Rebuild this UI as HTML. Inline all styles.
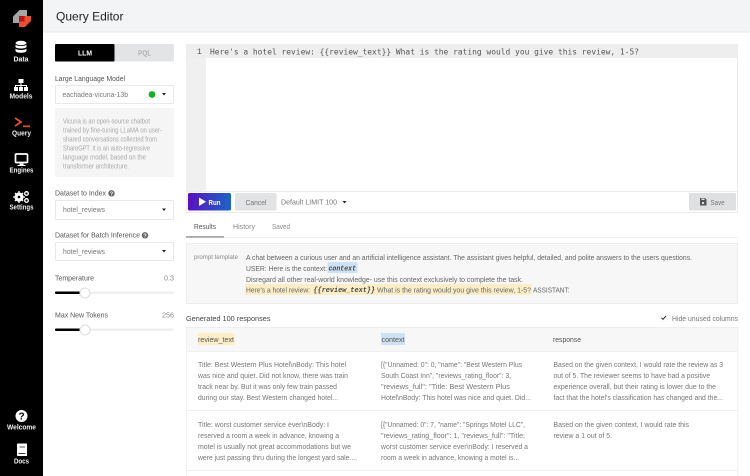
<!DOCTYPE html>
<html><head><meta charset="utf-8"><style>
html,body{margin:0;padding:0;background:#fff}
svg{display:block;font-family:"Liberation Sans",sans-serif}
.n{font-size:7.6px;fill:#f0f0f0;text-anchor:middle;font-weight:bold}
.l{font-size:7.7px;fill:#555}
.d{font-size:7.2px;fill:#aaa}
.t{font-size:7.7px;fill:#777}
.p{font-size:7.7px;fill:#666}
.m{font-family:"Liberation Mono",monospace;font-weight:bold;font-style:italic;font-size:7.5px;fill:#444}
</style></head><body>
<svg width="750" height="476" viewBox="0 0 750 476" xmlns="http://www.w3.org/2000/svg">
<rect width="750" height="476" fill="#fff"/>
<rect x="43" width="707" height="32" fill="#f3f4f6"/>
<rect x="43" y="31.500" width="707" height="1" fill="#e6e7e9"/>
<rect width="43" height="476" fill="#000"/>

<!-- logo -->
<path d="M13 16.500L19.500 10H27V16H19V23H13Z" fill="#a5a5a5"/>
<path d="M19 16H31V21L25 27H19Z" fill="#e8502f"/>
<rect x="19" y="16" width="5.500" height="5.500" fill="#b81414"/>

<!-- Data -->
<g fill="#fff"><ellipse cx="21" cy="43" rx="5.500" ry="2.200"/><path d="M15.500 44.500c1 2 10 2 11 0V47c-1 2-10 2-11 0Z"/><path d="M15.500 48.500c1 2 10 2 11 0V51c-1 2.400-10 2.400-11 0Z"/></g>
<text class="n" x="21" y="61.500" textLength="15" lengthAdjust="spacingAndGlyphs">Data</text>
<!-- Models -->
<g fill="#fff"><rect x="18.500" y="79" width="5" height="4"/><rect x="14" y="87" width="4" height="4"/><rect x="19" y="87" width="4" height="4"/><rect x="24" y="87" width="4" height="4"/><path d="M20.500 83h1v2h5.500v2h-1v-1H21.500v1h-1v-1H16v1h-1v-2h5.500Z"/></g>
<text class="n" x="21" y="98.500" textLength="23" lengthAdjust="spacingAndGlyphs">Models</text>
<!-- Query -->
<path d="M15 118l6 4-6 4" fill="none" stroke="#e8502f" stroke-width="1.800"/>
<rect x="23" y="125.500" width="7" height="1.700" fill="#e8502f"/>
<text class="n" x="21.500" y="135.500" textLength="19" lengthAdjust="spacingAndGlyphs">Query</text>
<!-- Engines -->
<rect x="15.500" y="154" width="12" height="8.500" rx="1" fill="none" stroke="#fff" stroke-width="1.700"/>
<path d="M19.500 163.500h4v1.500h2v1h-8v-1h2Z" fill="#fff"/>
<text class="n" x="21.500" y="172.500" textLength="24" lengthAdjust="spacingAndGlyphs">Engines</text>
<!-- Settings -->
<circle cx="19" cy="197" r="3.200" fill="none" stroke="#fff" stroke-width="2.800"/>
<path d="M19 191v12M13 197h12M15 193l8 8M23 193l-8 8" stroke="#fff" stroke-width="1.300"/>
<circle cx="19" cy="197" r="1.300" fill="#000"/>
<circle cx="26.500" cy="193.500" r="1.800" fill="none" stroke="#fff" stroke-width="1.300"/>
<circle cx="26.500" cy="200.500" r="1.800" fill="none" stroke="#fff" stroke-width="1.300"/>
<text class="n" x="21.500" y="209.500" textLength="24" lengthAdjust="spacingAndGlyphs">Settings</text>
<!-- Welcome -->
<circle cx="21.500" cy="416" r="6" fill="#fff"/>
<text x="21.500" y="419.500" font-size="10" font-weight="bold" text-anchor="middle" fill="#000">?</text>
<text class="n" x="21.500" y="429.500" textLength="29" lengthAdjust="spacingAndGlyphs">Welcome</text>
<!-- Docs -->
<path d="M17.500 443.500h9.500v12.500h-9a1 1 0 0 1-1-1V444.500a1 1 0 0 1 .5-1Z" fill="#fff"/>
<rect x="19.500" y="446" width="5.500" height="2" fill="#aaa"/>
<rect x="18.500" y="453" width="7" height=".9" fill="#222"/>
<text class="n" x="21.500" y="463.500" textLength="15" lengthAdjust="spacingAndGlyphs">Docs</text>

<text x="56" y="20.500" font-size="12" fill="#222" textLength="67.500" lengthAdjust="spacingAndGlyphs">Query Editor</text>

<!-- Left panel -->
<rect x="55" y="44" width="119" height="17.500" rx="1.500" fill="#e3e4e6"/>
<rect x="55" y="44" width="59.500" height="17.500" rx="1" fill="#000"/>
<text x="85" y="55.500" font-size="7.700" font-weight="bold" fill="#fff" text-anchor="middle" textLength="14" lengthAdjust="spacingAndGlyphs">LLM</text>
<text x="144.500" y="55.500" font-size="7.700" fill="#999" text-anchor="middle" textLength="13" lengthAdjust="spacingAndGlyphs">PQL</text>

<text class="l" x="55" y="81" textLength="70" lengthAdjust="spacingAndGlyphs">Large Language Model</text>
<rect x="55.500" y="85.500" width="118" height="18" rx="1" fill="#fff" stroke="#e9e9e9"/>
<text class="t" x="62.500" y="97" textLength="65.500" lengthAdjust="spacingAndGlyphs">eachadea-vicuna-13b</text>
<circle cx="152" cy="94.500" r="3.400" fill="#12b02c"/>
<path d="M162 93h4l-2 2.500Z" fill="#222"/>

<rect x="55" y="108" width="119" height="69" fill="#f5f5f5"/>
<text class="d" x="63" y="123.300" textLength="87" lengthAdjust="spacingAndGlyphs">Vicuna is an open-source chatbot</text>
<text class="d" x="63" y="132.300" textLength="99" lengthAdjust="spacingAndGlyphs">trained by fine-tuning LLaMA on user-</text>
<text class="d" x="63" y="141.300" textLength="94" lengthAdjust="spacingAndGlyphs">shared conversations collected from</text>
<text class="d" x="63" y="150.300" textLength="87" lengthAdjust="spacingAndGlyphs">ShareGPT. It is an auto-regressive</text>
<text class="d" x="63" y="159.300" textLength="83" lengthAdjust="spacingAndGlyphs">language model, based on the</text>
<text class="d" x="63" y="168.300" textLength="66" lengthAdjust="spacingAndGlyphs">transformer architecture.</text>

<text class="l" x="55" y="195.500" textLength="51" lengthAdjust="spacingAndGlyphs">Dataset to Index</text>
<circle cx="111.500" cy="193.300" r="3.200" fill="#666"/>
<text x="111.500" y="195.500" font-size="5.500" font-weight="bold" fill="#fff" text-anchor="middle">?</text>
<rect x="55.500" y="200.500" width="118" height="19" rx="1" fill="#fff" stroke="#e9e9e9"/>
<text class="t" x="63" y="212" textLength="42" lengthAdjust="spacingAndGlyphs">hotel_reviews</text>
<path d="M162 208.500h4l-2 2.500Z" fill="#222"/>

<text class="l" x="55" y="237.300" textLength="85" lengthAdjust="spacingAndGlyphs">Dataset for Batch Inference</text>
<circle cx="145" cy="235.300" r="3.200" fill="#666"/>
<text x="145" y="237.500" font-size="5.500" font-weight="bold" fill="#fff" text-anchor="middle">?</text>
<rect x="55.500" y="242.500" width="118" height="18" rx="1" fill="#fff" stroke="#e9e9e9"/>
<text class="t" x="63" y="253.800" textLength="42" lengthAdjust="spacingAndGlyphs">hotel_reviews</text>
<path d="M162 250h4l-2 2.500Z" fill="#222"/>

<text class="l" x="55" y="280.500" textLength="39" lengthAdjust="spacingAndGlyphs">Temperature</text>
<text class="d" x="164" y="280.500" textLength="10" lengthAdjust="spacingAndGlyphs" style="fill:#888">0.3</text>
<rect x="55" y="291.500" width="119" height="2.500" rx="1" fill="#efefef"/>
<rect x="55" y="291.500" width="30" height="2.500" rx="1" fill="#000"/>
<circle cx="85" cy="293" r="5" fill="#fff" stroke="#ddd"/>

<text class="l" x="55" y="317.500" textLength="53" lengthAdjust="spacingAndGlyphs">Max New Tokens</text>
<text class="d" x="162" y="317.500" textLength="12" lengthAdjust="spacingAndGlyphs" style="fill:#888">256</text>
<rect x="55" y="328.500" width="119" height="2.500" rx="1" fill="#efefef"/>
<rect x="55" y="328.500" width="30" height="2.500" rx="1" fill="#000"/>
<circle cx="85" cy="330" r="5" fill="#fff" stroke="#ddd"/>

<!-- Editor -->
<rect x="186" y="44" width="551.500" height="168" fill="#fff"/>
<rect x="186" y="44" width="20" height="147" fill="#f0f0f0"/>
<rect x="186" y="44" width="551.500" height="14" fill="#eeeeee"/>
<rect x="737" y="44" width=".8" height="168" fill="#e8e8e8"/>
<text x="197" y="54" font-family="Liberation Mono,monospace" font-size="8" fill="#555">1</text>
<text x="210" y="54.500" font-family="DejaVu Sans Mono,monospace" font-size="7.800" fill="#555" textLength="429" lengthAdjust="spacingAndGlyphs">Here's a hotel review: {{review_text}} What is the rating would you give this review, 1-5?</text>

<!-- Toolbar -->
<rect x="186" y="191" width="552" height=".8" fill="#e8e8e8"/>
<rect x="186" y="212" width="552" height=".8" fill="#e8e8e8"/>
<rect x="186" y="191" width=".8" height="21" fill="#eee"/>
<defs><linearGradient id="g" x1="0" x2="1" y1="0" y2="0"><stop offset="0" stop-color="#5a10c0"/><stop offset="1" stop-color="#1a66c4"/></linearGradient></defs>
<rect x="188" y="193" width="43" height="17.500" rx="1.500" fill="url(#g)"/>
<path d="M199 197.500L206 201.800L199 206Z" fill="#fff"/>
<text x="208.500" y="204.800" font-size="7.700" font-weight="bold" fill="#fff" textLength="12" lengthAdjust="spacingAndGlyphs">Run</text>
<rect x="235" y="193" width="41.500" height="17.500" rx="1.500" fill="#e2e3e5"/>
<text x="245.500" y="204.800" font-size="7.700" fill="#777" textLength="21" lengthAdjust="spacingAndGlyphs">Cancel</text>
<text class="t" x="281" y="204.500" textLength="56" lengthAdjust="spacingAndGlyphs">Default LIMIT 100</text>
<path d="M342.500 201h4l-2 2.500Z" fill="#222"/>
<rect x="689" y="193" width="47" height="17.500" rx="1.500" fill="#dfe0e2"/>
<path d="M700 198h5l1.500 1.500V205.500h-6.500Z" fill="#555"/>
<rect x="701.500" y="198.500" width="3" height="1.500" fill="#dfe0e2"/>
<rect x="702" y="202" width="2" height="2" fill="#dfe0e2"/>
<text x="710.500" y="204.800" font-size="7.700" fill="#777" textLength="14" lengthAdjust="spacingAndGlyphs">Save</text>

<!-- Tabs -->
<text x="194" y="228.800" font-size="7.700" fill="#555" textLength="22" lengthAdjust="spacingAndGlyphs">Results</text>
<text x="233" y="228.800" font-size="7.700" fill="#888" textLength="22" lengthAdjust="spacingAndGlyphs">History</text>
<text x="272" y="228.800" font-size="7.700" fill="#888" textLength="18" lengthAdjust="spacingAndGlyphs">Saved</text>
<rect x="186" y="237" width="552" height=".8" fill="#eee"/>
<rect x="186" y="236" width="38" height="1.800" fill="#aaa"/>

<!-- Prompt -->
<rect x="186.500" y="243.500" width="551" height="60" fill="#f7f7f7" stroke="#ececec"/>
<text x="194" y="259" font-size="6.600" fill="#888" textLength="44" lengthAdjust="spacingAndGlyphs">prompt template</text>
<text class="p" x="246" y="259.800" textLength="446" lengthAdjust="spacingAndGlyphs">A chat between a curious user and an artificial intelligence assistant. The assistant gives helpful, detailed, and polite answers to the users questions.</text>
<text class="p" x="246" y="270.800" textLength="81" lengthAdjust="spacingAndGlyphs">USER: Here is the context:</text>
<rect x="327.500" y="262" width="30" height="11" fill="#cfe2f3"/>
<text class="m" x="328.500" y="270.500" textLength="27.500" lengthAdjust="spacingAndGlyphs">context</text>
<text class="p" x="246" y="281.800" textLength="277" lengthAdjust="spacingAndGlyphs">Disregard all other real-world knowledge- use this context exclusively to complete the task.</text>
<rect x="245" y="284" width="287" height="11" fill="#fbeec6"/>
<text class="p" x="246" y="292.300" textLength="64" lengthAdjust="spacingAndGlyphs">Here's a hotel review:</text>
<text class="m" x="313.500" y="292" textLength="61.500" lengthAdjust="spacingAndGlyphs">{{review_text}}</text>
<text class="p" x="377" y="292.300" textLength="154" lengthAdjust="spacingAndGlyphs">What is the rating would you give this review, 1-5?</text>
<text class="p" x="533" y="292.300" textLength="36.500" lengthAdjust="spacingAndGlyphs">ASSISTANT:</text>

<!-- Results header -->
<text x="186" y="320.800" font-size="7.700" fill="#444" textLength="84.500" lengthAdjust="spacingAndGlyphs">Generated 100 responses</text>
<rect x="660" y="314" width="7.500" height="7.500" rx="1" fill="#fff" stroke="#f0f0f0" stroke-width=".6"/>
<path d="M661.500 317.800l1.500 1.500 3-3.300" fill="none" stroke="#222" stroke-width="1"/>
<text class="t" x="672" y="320.800" textLength="66" lengthAdjust="spacingAndGlyphs">Hide unused columns</text>

<!-- Table -->
<rect x="186" y="327" width="552" height="24.500" fill="#f7f7f7"/>
<rect x="186" y="327" width="552" height=".8" fill="#ececec"/>
<rect x="186" y="351" width="552" height=".8" fill="#ececec"/>
<rect x="186" y="410" width="552" height=".8" fill="#ececec"/>
<rect x="186" y="470" width="552" height=".8" fill="#ececec"/>
<rect x="186" y="327" width=".8" height="149" fill="#efefef"/>
<rect x="737.500" y="327" width=".8" height="149" fill="#efefef"/>
<rect x="198" y="333" width="36.500" height="12" fill="#fbeec6"/>
<text x="198" y="341.800" font-size="7.700" fill="#555" textLength="36" lengthAdjust="spacingAndGlyphs">review_text</text>
<rect x="381" y="333" width="24" height="12" fill="#cfe2f3"/>
<text x="381.500" y="341.800" font-size="7.700" fill="#555" textLength="23" lengthAdjust="spacingAndGlyphs">context</text>
<text x="553" y="341.800" font-size="7.700" fill="#555" textLength="28" lengthAdjust="spacingAndGlyphs">response</text>

<text class="t" x="198" y="367" textLength="148" lengthAdjust="spacingAndGlyphs">Title: Best Western Plus Hotel\nBody: This hotel</text>
<text class="t" x="198" y="378" textLength="150" lengthAdjust="spacingAndGlyphs">was nice and quiet. Did not know, there was train</text>
<text class="t" x="198" y="389" textLength="139" lengthAdjust="spacingAndGlyphs">track near by. But it was only few train passed</text>
<text class="t" x="198" y="400" textLength="140" lengthAdjust="spacingAndGlyphs">during our stay. Best Western changed hotel...</text>

<text class="t" x="381" y="367" textLength="141" lengthAdjust="spacingAndGlyphs">[{"Unnamed: 0": 0, "name": "Best Western Plus</text>
<text class="t" x="381" y="378" textLength="130" lengthAdjust="spacingAndGlyphs">South Coast Inn", "reviews_rating_floor": 3,</text>
<text class="t" x="381" y="389" textLength="129" lengthAdjust="spacingAndGlyphs">"reviews_full": "Title: Best Western Plus</text>
<text class="t" x="381" y="400" textLength="150" lengthAdjust="spacingAndGlyphs">Hotel\nBody: This hotel was nice and quiet. Did...</text>

<text class="t" x="553.500" y="367" textLength="169.500" lengthAdjust="spacingAndGlyphs">Based on the given context, I would rate the review as 3</text>
<text class="t" x="553.500" y="378" textLength="156.500" lengthAdjust="spacingAndGlyphs">out of 5. The reviewer seems to have had a positive</text>
<text class="t" x="553.500" y="389" textLength="162.500" lengthAdjust="spacingAndGlyphs">experience overall, but their rating is lower due to the</text>
<text class="t" x="553.500" y="400" textLength="169.500" lengthAdjust="spacingAndGlyphs">fact that the hotel's classification has changed and the...</text>

<text class="t" x="198" y="427" textLength="131" lengthAdjust="spacingAndGlyphs">Title: worst customer service ever\nBody: I</text>
<text class="t" x="198" y="438" textLength="141" lengthAdjust="spacingAndGlyphs">reserved a room a week in advance, knowing a</text>
<text class="t" x="198" y="449" textLength="153" lengthAdjust="spacingAndGlyphs">motel is usually not great accommodations but we</text>
<text class="t" x="198" y="460" textLength="159" lengthAdjust="spacingAndGlyphs">were just passing thru during the longest yard sale....</text>

<text class="t" x="381" y="427" textLength="144" lengthAdjust="spacingAndGlyphs">[{"Unnamed: 0": 7, "name": "Springs Motel LLC",</text>
<text class="t" x="381" y="438" textLength="144" lengthAdjust="spacingAndGlyphs">"reviews_rating_floor": 1, "reviews_full": "Title:</text>
<text class="t" x="381" y="449" textLength="147" lengthAdjust="spacingAndGlyphs">worst customer service ever\nBody: I reserved a</text>
<text class="t" x="381" y="460" textLength="138" lengthAdjust="spacingAndGlyphs">room a week in advance, knowing a motel is...</text>

<text class="t" x="553.500" y="427" textLength="135.500" lengthAdjust="spacingAndGlyphs">Based on the given context, I would rate this</text>
<text class="t" x="553.500" y="438" textLength="58.500" lengthAdjust="spacingAndGlyphs">review a 1 out of 5.</text>
</svg>
</body></html>
